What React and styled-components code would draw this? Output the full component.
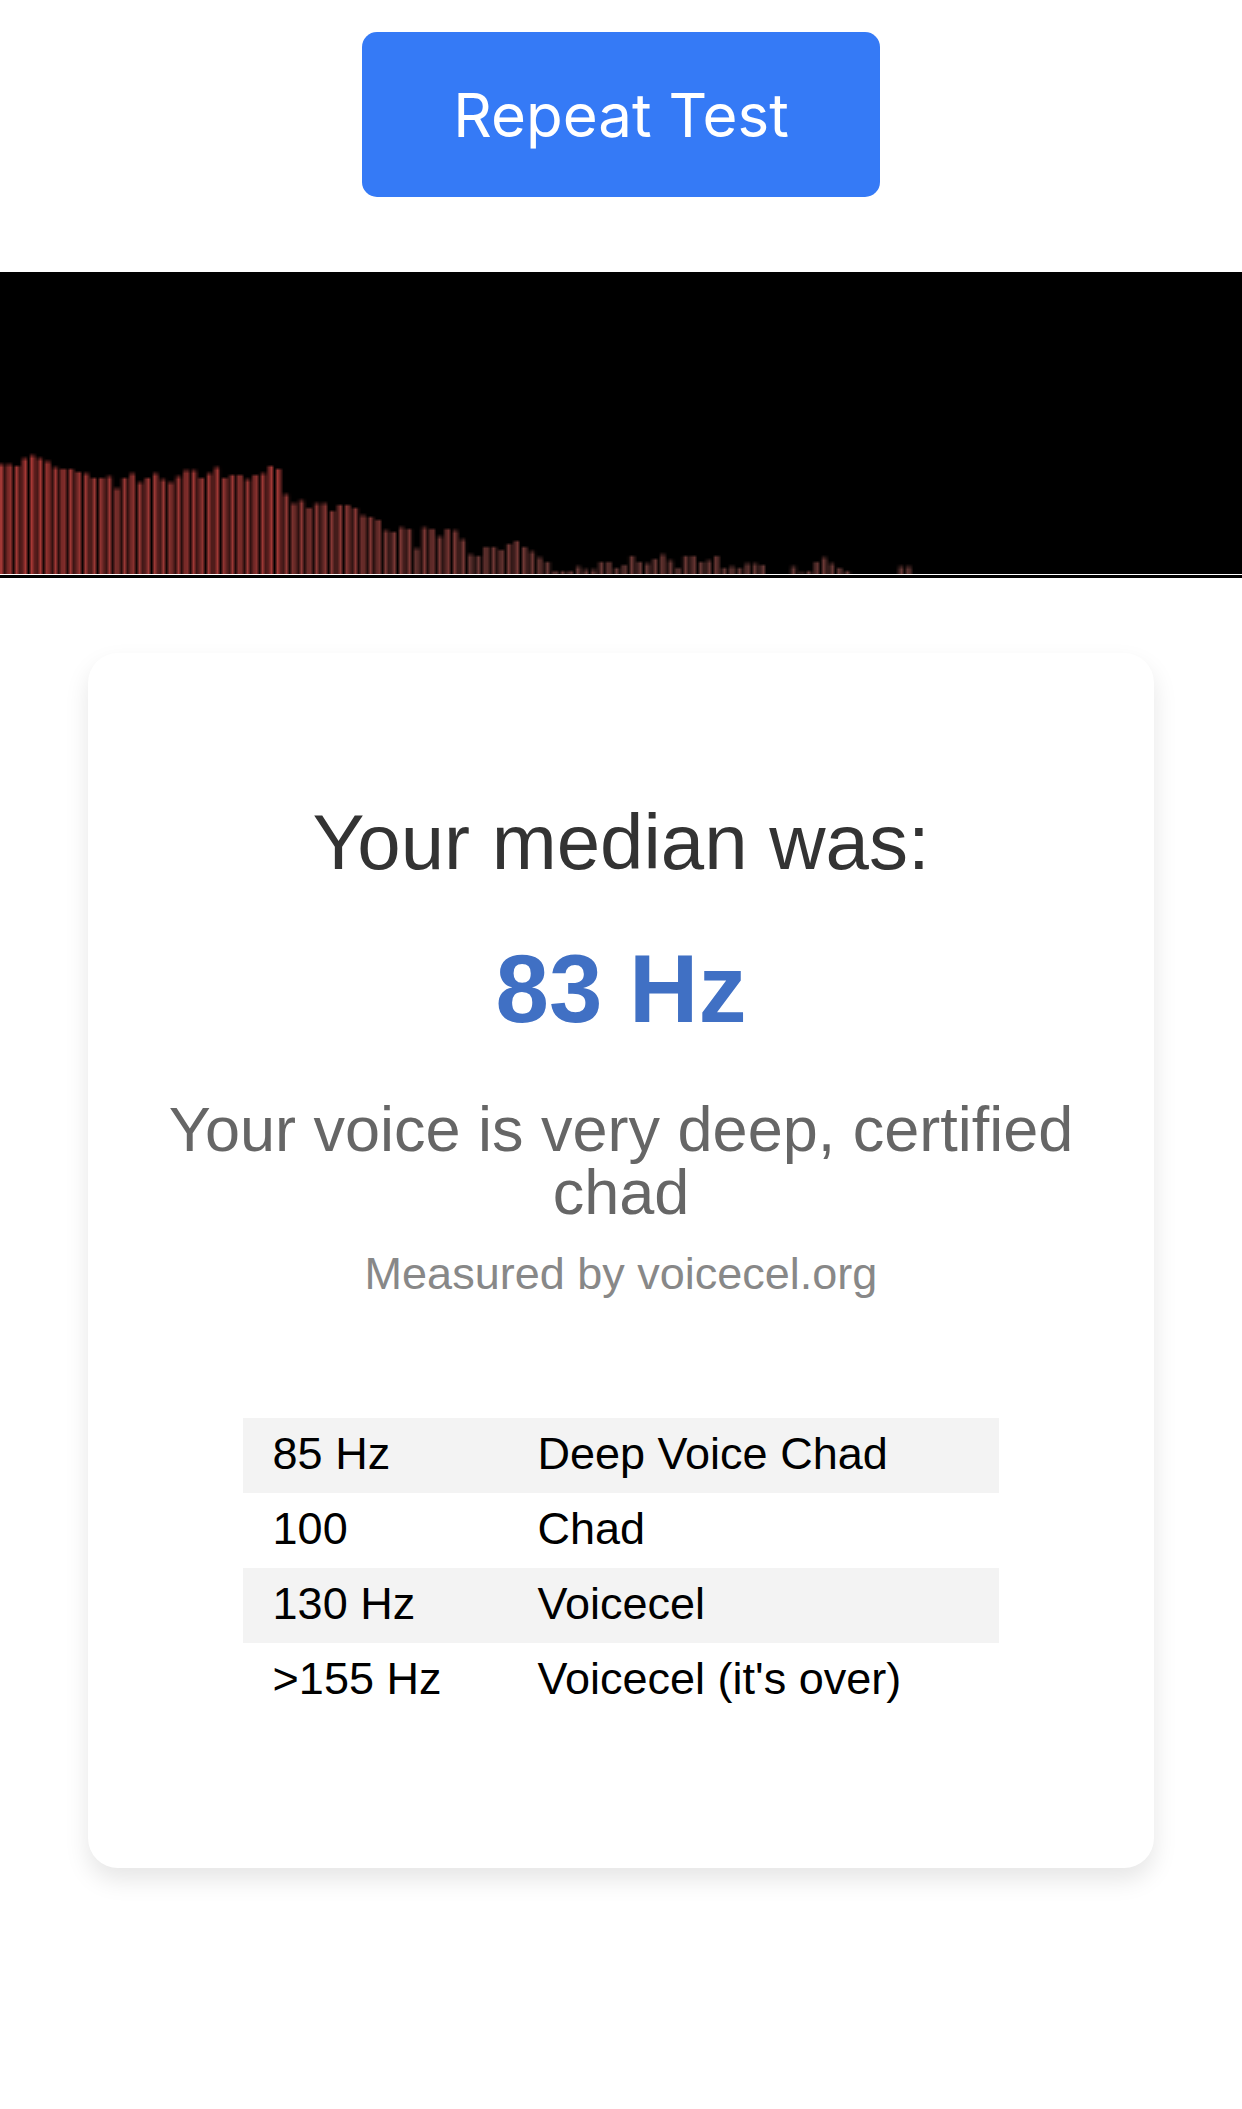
import React, { useEffect, useRef } from 'react';
import styled, { createGlobalStyle } from 'styled-components';

// --- DATA ---
const BAR_HEIGHTS = [
  36.5, 36.5, 36, 38.5, 39.5, 38.5, 37.5, 35.5, 35, 35, 34, 33.5, 32, 32, 32.5, 28.5, 32, 33.5, 30.5, 32,
  33.5, 31.5, 30.5, 32.5, 34.5, 34.5, 32, 33.5, 35.5, 32, 33, 33, 31.5, 33, 33.5, 36, 35, 26.5, 23.5, 24.5,
  22, 23.5, 23.5, 21, 23, 23, 22, 19.5, 19, 18, 14.5, 14, 15.5, 15, 8.5, 15.5, 15, 12.5, 15, 14.5,
  11.5, 6.5, 6, 9, 9, 8, 10, 11, 9, 7.5, 5.5, 4, 1, 1, 1, 2.5, 1.5, 1.5, 4, 4,
  2, 3, 6, 4, 3.5, 5, 6.5, 4.5, 2, 6, 6, 4, 4.5, 6, 2, 2.5, 2, 3.5, 3.5, 3,
  0, 0, 0, 2.5, 0.5, 1, 4, 5.5, 3.5, 2, 1, 0, 0, 0, 0, 0, 0, 2.5, 2.5,
];

const VOICE_RANGES = [
  { pitch: '85 Hz', label: 'Deep Voice Chad' },
  { pitch: '100', label: 'Chad' },
  { pitch: '130 Hz', label: 'Voicecel' },
  { pitch: '>155 Hz', label: "Voicecel (it's over)" },
];

const CANVAS_WIDTH = 414;
const CANVAS_HEIGHT = 100;
const BAR_WIDTH = 1.5625;
const BAR_START = -0.25;

// --- STYLES ---
const GlobalStyle = createGlobalStyle`
  * { box-sizing: border-box; }
  body {
    margin: 0;
    background-color: #fff;
    font-family: "Liberation Sans", Arial, sans-serif;
  }
`;
const Page = styled.main`
  display: flex;
  flex-direction: column;
  align-items: center;
  padding: 32px 0 240px;
`;
const RepeatButton = styled.button`
  padding: 46px 91px 44px;
  border: none;
  border-radius: 15px;
  background-color: #357af6;
  color: #fff;
  font-family: Inter, sans-serif;
  font-size: 60px;
  line-height: 75px;
  cursor: pointer;
`;
const Visualizer = styled.div`
  width: 100%;
  margin-top: 75px;
  padding-top: 2px;
  background-color: #000;
  border-bottom: 3px solid #000;
`;
const Spectrum = styled.canvas`
  display: block;
  width: 100%;
  border-bottom: 1px solid #fff;
`;
const Card = styled.section`
  align-self: stretch;
  display: flex;
  flex-direction: column;
  align-items: center;
  margin: 75px 88px 0;
  padding: 150px 60px;
  border-radius: 30px;
  background-color: #fff;
  box-shadow: 0 12px 24px rgba(0, 0, 0, 0.1);
  text-align: center;
`;
const Title = styled.h1`
  margin: 0 0 60px;
  color: #333;
  font-size: 78px;
  font-weight: 400;
  line-height: 78px;
`;
const Median = styled.p`
  margin: 0 0 61px;
  color: #4070c4;
  font-size: 96px;
  font-weight: 700;
  line-height: 96px;
`;
const Verdict = styled.p`
  margin: 0 0 27px;
  color: #666;
  font-size: 63px;
  line-height: 63px;
`;
const Source = styled.p`
  margin: 0 0 122px;
  color: #888;
  font-size: 45px;
  line-height: 45px;
`;
const RangeTable = styled.table`
  width: 80%;
  border-collapse: collapse;
  table-layout: fixed;
  color: #000;
  font-size: 45px;
  line-height: 45px;
  text-align: left;
`;
const RangeRow = styled.tr`
  &:nth-child(odd) { background-color: #f3f3f3; }
`;
const RangeCell = styled.td`
  width: ${(props) => props.$width};
  padding: 13px 30px 17px;
`;

const SpectrumChart = () => {
  const canvasRef = useRef(null);

  useEffect(() => {
    const ctx = canvasRef.current.getContext('2d');
    ctx.fillStyle = '#000';
    ctx.fillRect(0, 0, CANVAS_WIDTH, CANVAS_HEIGHT);

    let x = BAR_START;
    BAR_HEIGHTS.forEach((height) => {
      // louder bins are redder
      ctx.fillStyle = `rgb(${Math.round(height * 1.8 + 96)}, 56, 53)`;
      ctx.fillRect(x, CANVAS_HEIGHT - height, BAR_WIDTH, height);
      x += BAR_WIDTH + 1;
    });
  }, []);

  return <Spectrum ref={canvasRef} width={CANVAS_WIDTH} height={CANVAS_HEIGHT} aria-label="Voice spectrum" />;
};

const App = () => (
  <>
    <GlobalStyle />
    <Page>
      <RepeatButton type="button">Repeat Test</RepeatButton>
      <Visualizer>
        <SpectrumChart />
      </Visualizer>
      <Card>
        <Title>Your median was:</Title>
        <Median>83 Hz</Median>
        <Verdict>Your voice is very deep, certified chad</Verdict>
        <Source>Measured by voicecel.org</Source>
        <RangeTable>
          <tbody>
            {VOICE_RANGES.map((range) => (
              <RangeRow key={range.pitch}>
                <RangeCell $width="35%">{range.pitch}</RangeCell>
                <RangeCell $width="65%">{range.label}</RangeCell>
              </RangeRow>
            ))}
          </tbody>
        </RangeTable>
      </Card>
    </Page>
  </>
);

export default App;
